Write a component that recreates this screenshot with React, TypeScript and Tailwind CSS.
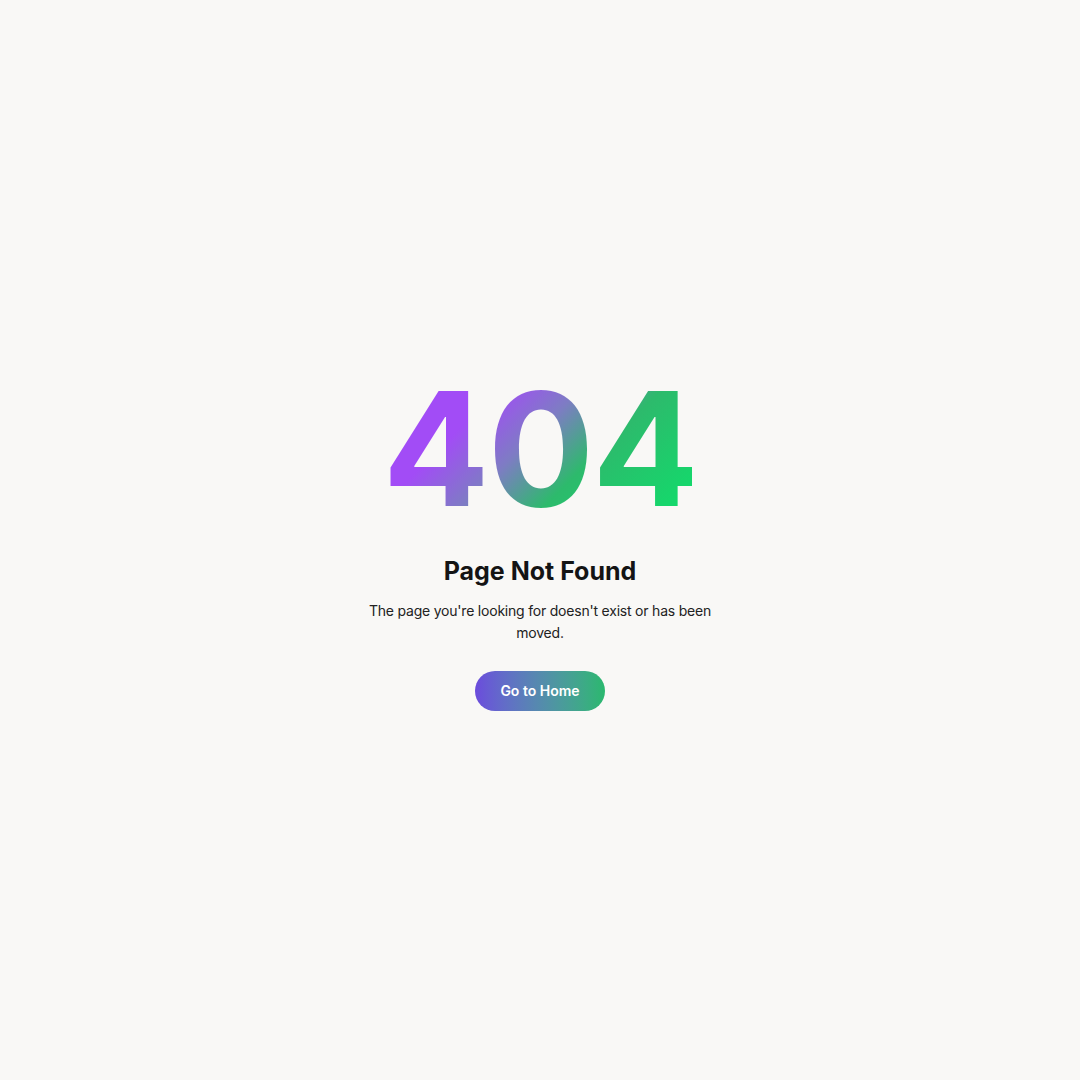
export default function App() {
  return (
    <div className="min-h-screen w-full bg-[#f9f8f6] flex items-center justify-center" style={{ fontFamily: "Inter, 'Noto Sans', sans-serif" }}>
      <div className="flex flex-col items-center text-center pt-[1px]">
        <h1 className="text-[158px] font-bold leading-none tracking-[-0.012em] bg-[linear-gradient(135deg,#a24cf6_28%,#7e7cc4_45%,#2dba6c_62%,#0be46b_100%)] bg-clip-text text-transparent pb-2">
          404
        </h1>
        <h2 className="mt-[20px] text-[25px] font-bold text-[#141414] leading-tight">Page Not Found</h2>
        <p className="mt-3 max-w-[360px] text-[14px] leading-[22px] tracking-[-0.015em] text-[#222]">
          The page you're looking for doesn't exist or has been moved.
        </p>
        <button className="mt-[27px] h-10 px-[25px] rounded-full bg-gradient-to-r from-[#6b4bdc] to-[#2ab86e] text-white text-[14px] font-semibold">
          Go to Home
        </button>
      </div>
    </div>
  );
}
